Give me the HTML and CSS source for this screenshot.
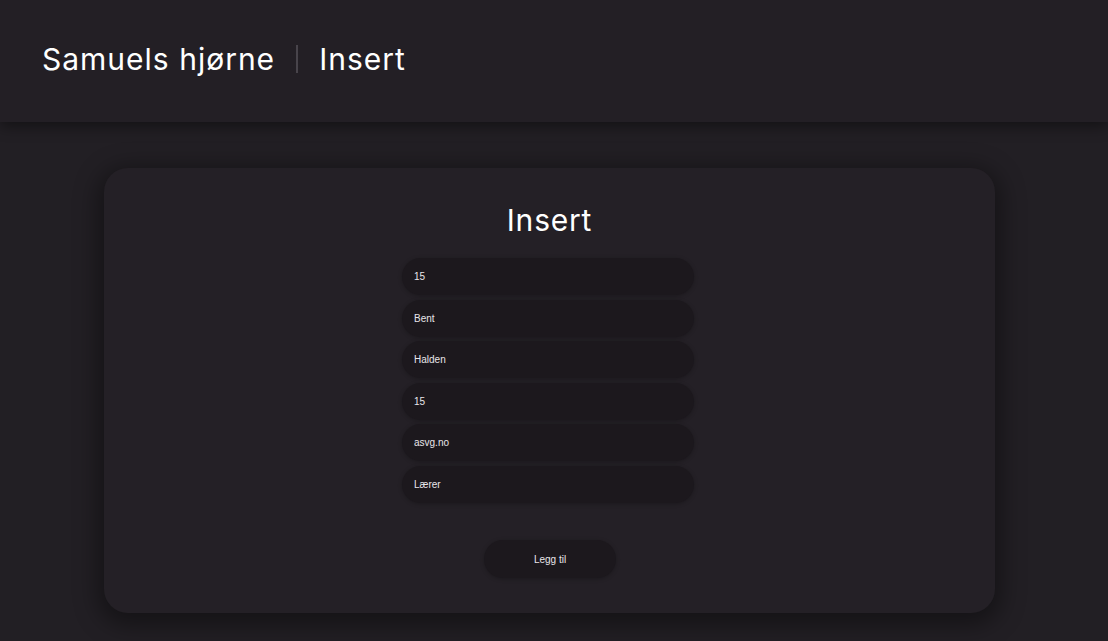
FILE: index.html
```html
<!DOCTYPE html>
<html lang="no">
<head>
    <meta charset="UTF-8">
    <meta name="viewport" content="width=device-width, initial-scale=1.0">
    <title>Samuels hjørne | Insert</title>
    <link rel="stylesheet" href="styles.css">
</head>
<body>
    <header>
        <h1>Samuels hjørne <span class="divider"></span> Insert</h1>
    </header>
    <main>
        <div class="card">
            <h2>Insert</h2>
            <form class="insert-form">
                <input type="text" value="15">
                <input type="text" value="Bent">
                <input type="text" value="Halden">
                <input type="text" value="15">
                <input type="text" value="asvg.no">
                <input type="text" value="Lærer">
                <button type="button" class="btn-add">Legg til</button>
            </form>
        </div>
    </main>
</body>
</html>
```

FILE: styles.css
```css
body {
    font-family: Inter, "DejaVu Sans", sans-serif;
    margin: 0;
    padding: 0;
    background-color: #221f24;
    color: #fff;
    min-height: 100vh;
}
header {
    background-color: #231f25;
    height: 122px;
    display: flex;
    align-items: center;
    padding: 0 42px;
    box-shadow: 0 4px 14px rgba(0, 0, 0, 0.45);
    position: relative;
    z-index: 1;
}
h1 {
    margin: 0;
    font-weight: 400;
    font-size: 30px;
    letter-spacing: 1px;
    display: flex;
    align-items: center;
    margin-top: -4px;
}
.divider {
    display: inline-block;
    width: 2px;
    height: 28px;
    background: #48444b;
    margin: 0 21px 0 21px;
}
main {
    padding: 46px 0 28px 104px;
}
.card {
    width: 891px;
    height: 445px;
    box-sizing: border-box;
    background: #242026;
    border-radius: 24px;
    box-shadow: 0 6px 24px 6px rgba(0, 0, 0, 0.4);
    padding-top: 34px;
    display: flex;
    flex-direction: column;
    align-items: center;
}
h2 {
    margin: 0 0 20px;
    font-weight: 400;
    font-size: 30px;
    letter-spacing: 0.8px;
}
.insert-form {
    display: flex;
    flex-direction: column;
    align-items: center;
    gap: 4.5px;
    margin-right: 3px;
}
.insert-form input {
    width: 292px;
    height: 37px;
    box-sizing: border-box;
    border: none;
    border-radius: 19px;
    background: #1c181d;
    color: #e8e6ea;
    font-family: "Liberation Sans", Arial, sans-serif;
    font-size: 10px;
    padding: 0 12px;
    outline: none;
    box-shadow: 0 1px 4px rgba(0, 0, 0, 0.25);
}
.btn-add {
    margin: 33px 0 0 4px;
    width: 132px;
    height: 38px;
    border: none;
    border-radius: 19px;
    background: #1c181d;
    color: #e8e6ea;
    font-family: "Liberation Sans", Arial, sans-serif;
    font-size: 10px;
    cursor: pointer;
    box-shadow: 0 1px 4px rgba(0, 0, 0, 0.25);
}
```
